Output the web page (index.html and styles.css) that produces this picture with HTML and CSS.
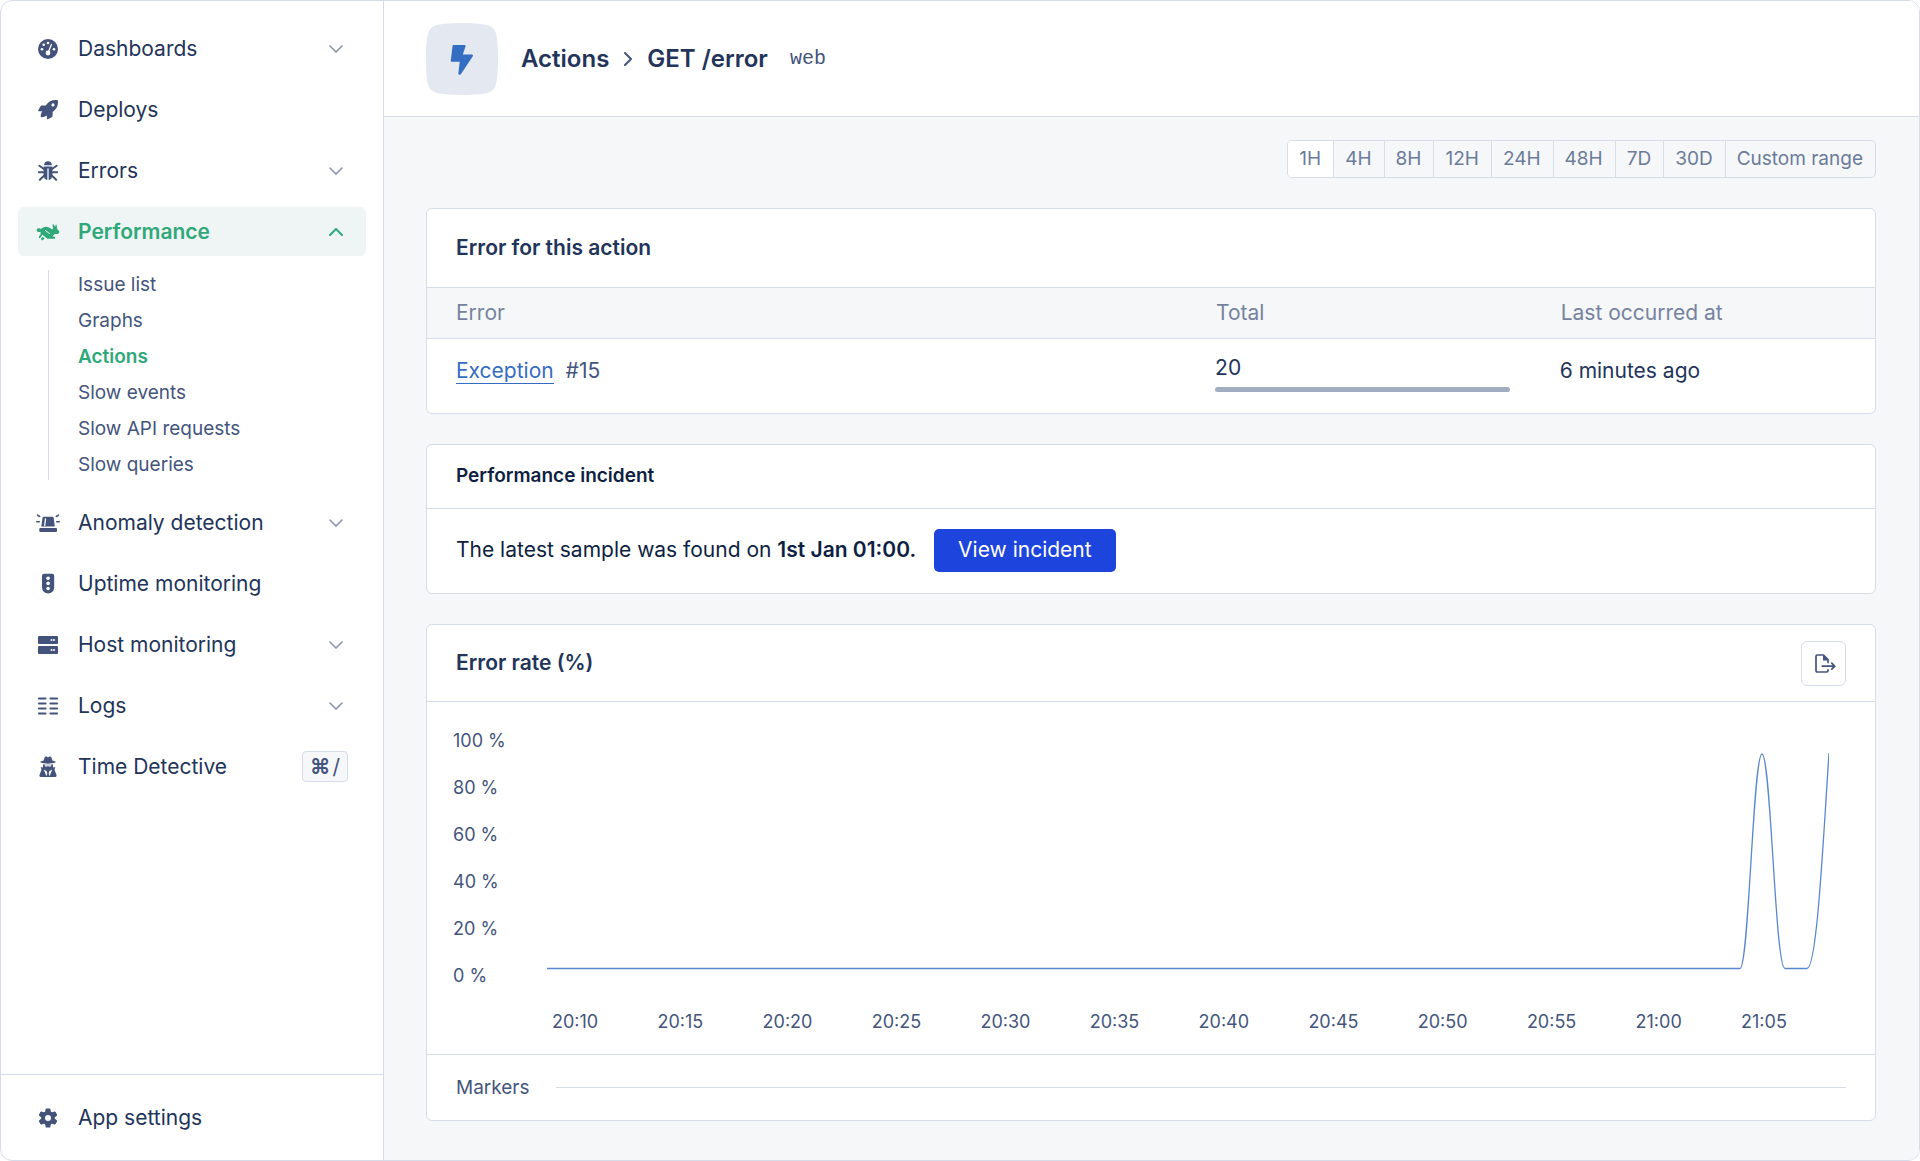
FILE: index.html
```html
<!DOCTYPE html>
<html lang="en">
<head>
<meta charset="utf-8">
<meta name="viewport" content="width=device-width, initial-scale=1">
<title>Actions – GET /error</title>
<link rel="stylesheet" href="styles.css">
</head>
<body>
<div class="frame">
  <aside class="sidebar">
    <nav class="nav">
      <button class="nav-item" type="button">
        <svg class="icon" viewBox="0 0 24 24"><circle cx="12" cy="12" r="10"/><g class="cut"><circle cx="12" cy="6" r="1.3"/><circle cx="7.7" cy="7.7" r="1.3"/><circle cx="6" cy="12.3" r="1.3"/><circle cx="18" cy="12.3" r="1.3"/><circle cx="12" cy="16" r="2.4"/></g><path class="cut-line" d="M15.4 7.4 12.6 14.5"/></svg>
        <span class="nav-label">Dashboards</span>
        <svg class="chevron" viewBox="0 0 14 8"><path d="M1 1l6 6 6-6"/></svg>
      </button>
      <a class="nav-item" href="#deploys">
        <svg class="icon" viewBox="0 0 24 24"><path d="M21.9 2.8c.4 4.5-1 8.2-5.3 11.3v3.7c0 .6-.3 1.1-.9 1.4l-3.9 2c-.5.2-.9-.1-.9-.6v-3c-1 .9-2.6 1.5-4.8 1.7-1 0-1.5-.5-1.4-1.5.2-2.100.8-3.600 1.700-4.600H2.900c-.6 0-.9-.5-.6-1L4.400 8.400c.3-.6.8-.9 1.400-.9h3.900C12.600 3.100 16.700 1.600 21.200 2.100c.4.1.6.3.7.7z"/><circle class="cut" cx="17" cy="6.900" r="1.600"/></svg>
        <span class="nav-label">Deploys</span>
      </a>
      <button class="nav-item" type="button">
        <svg class="icon" viewBox="0 0 24 24"><path d="M8.200 6.300a3.800 4 0 0 1 7.600 0z"/><path d="M7.600 7.500h8.800v8.800a4.400 4.800 0 0 1-8.800 0z"/><path class="bar" d="M3.300 6.700 8 10M20.700 6.700 16 10M2.800 13.300H21.200M3.800 20.700 8 16.700M20.200 20.700 16 16.700"/><path class="cut-line" d="M12 10v10.500"/></svg>
        <span class="nav-label">Errors</span>
        <svg class="chevron" viewBox="0 0 14 8"><path d="M1 1l6 6 6-6"/></svg>
      </button>
      <button class="nav-item nav-item-active" type="button" aria-expanded="true">
        <svg class="icon" viewBox="0 0 24 24"><path d="M2.300 8.300c1.100-.2 2 .3 2.600.8 1.800-2.300 5.700-3.300 8.700-1.300l2.500 1.800.9-1.100-.5-3.700c0-.7.700-.8 1.100-.3l1.700 2.500.2-1.900c.2-.7.900-.7 1.100-.1l.6 4.300 1.700 1.400c.8 1.300.3 3-1.200 3.200l-3 .1-2.300 2.400h1.500c.9 0 1.300.6 1.200 1.700l-.2.700h-7.500l-4.900-4-2.200 2.900c-.6.7-1.500.6-1.500-.2.100-1.200 1-2.500 1.900-3.300L4.500 11.800c-1.900.6-3.600 0-3.800-1.300-.1-1 .5-2 1.600-2.200z"/><path d="M5 18.500 6.500 17l2 1-1.500 2.200c-1 .4-2-.3-2-1.700z"/><path class="cut-line" d="M9.300 10.500 13.500 13.500"/></svg>
        <span class="nav-label">Performance</span>
        <svg class="chevron" viewBox="0 0 14 8"><path d="M1 7l6-6 6 6"/></svg>
      </button>
      <ul class="subnav">
        <li><a href="#issues">Issue list</a></li>
        <li><a href="#graphs">Graphs</a></li>
        <li><a class="current" href="#actions">Actions</a></li>
        <li><a href="#events">Slow events</a></li>
        <li><a href="#api">Slow API requests</a></li>
        <li><a href="#queries">Slow queries</a></li>
      </ul>
      <button class="nav-item" type="button">
        <svg class="icon" viewBox="0 0 24 24"><path d="M8 5.700h8.200c.8 0 1.300.4 1.500 1.200l1.100 8.600H5.300L6.500 6.900c.1-.8.700-1.200 1.500-1.200z"/><rect x="3.300" y="17" width="17.700" height="4" rx="1"/><path class="cut-line" d="M9.500 7.800 8.700 14.300"/><path class="ray" d="M.8 10.800h2.500M20.700 10.800h2.500M1.600 4.200l2 1.300M22.400 4.200l-2 1.300"/></svg>
        <span class="nav-label">Anomaly detection</span>
        <svg class="chevron" viewBox="0 0 14 8"><path d="M1 1l6 6 6-6"/></svg>
      </button>
      <a class="nav-item" href="#uptime">
        <svg class="icon" viewBox="0 0 24 24"><path d="M8 1.700h8.200a2 2 0 0 1 2 2v11.800a6.100 6.100 0 0 1-12.200 0V3.700a2 2 0 0 1 2-2z"/><g class="cut"><circle cx="12.100" cy="6.300" r="1.800"/><circle cx="12.100" cy="11.400" r="1.800"/><circle cx="12.100" cy="16.500" r="1.800"/></g></svg>
        <span class="nav-label">Uptime monitoring</span>
      </a>
      <button class="nav-item" type="button">
        <svg class="icon" viewBox="0 0 24 24"><rect x="2" y="3" width="20" height="8" rx="1"/><rect x="2" y="13" width="20" height="8" rx="1"/><g class="cut"><circle cx="15.500" cy="7" r="1"/><circle cx="18" cy="7" r="1"/><circle cx="15.500" cy="17" r="1"/><circle cx="18" cy="17" r="1"/></g></svg>
        <span class="nav-label">Host monitoring</span>
        <svg class="chevron" viewBox="0 0 14 8"><path d="M1 1l6 6 6-6"/></svg>
      </button>
      <button class="nav-item" type="button">
        <svg class="icon" viewBox="0 0 24 24"><path class="row" d="M3 4.500h6.500M14.500 4.500H21M3 9.500h6.500M14.500 9.500H21M3 14.500h6.500M14.500 14.500H21M3 19.500h6.500M14.500 19.500H21"/></svg>
        <span class="nav-label">Logs</span>
        <svg class="chevron" viewBox="0 0 14 8"><path d="M1 1l6 6 6-6"/></svg>
      </button>
      <button class="nav-item" type="button">
        <svg class="icon" viewBox="0 0 24 24"><path d="M9 2c.7-.6 1.600-.5 2.200 0 .5.4 1.100.4 1.600 0 .6-.5 1.500-.6 2.200 0 .8 1 1.200 2.200 1.400 3.600l3 .9c.5.5.2 1.100-.5 1.300-4.400 1.100-9.400 1.100-13.800 0-.7-.2-1-.8-.5-1.300l3-.9C7.800 4.200 8.200 3 9 2z"/><path d="M7 9.200c3.300.7 6.700.7 10 0v3.300l2.300-.5-.8 2.800 2 5.200c.4 1-.2 1.900-1.200 1.900H4.700c-1 0-1.600-.9-1.200-1.900l2-5.200-.8-2.800 2.300.5z"/><g class="cut"><path d="M8.500 10.200h7l-.6 1.300h-2.200l-.7-.6-.7.600H9.100zM8 14.500l2.700 1.700.6 2-.8 3L8.300 16zM16 14.500l-2.700 1.700-.6 2 .8 3L15.700 16z"/></g></svg>
        <span class="nav-label">Time Detective</span>
        <kbd class="shortcut"><b>⌘</b>/</kbd>
      </button>
    </nav>
    <div class="nav sidebar-foot">
      <a class="nav-item" href="#settings">
        <svg class="icon" viewBox="0 0 24 24"><circle cx="12" cy="12" r="6.900"/><path id="tooth" d="M9.600 3.300c.1-.6.5-.9 1-.9h2.800c.5 0 .9.3 1 .9l.6 3.500h-6z"/><use href="#tooth" transform="rotate(60 12 12)"/><use href="#tooth" transform="rotate(120 12 12)"/><use href="#tooth" transform="rotate(180 12 12)"/><use href="#tooth" transform="rotate(240 12 12)"/><use href="#tooth" transform="rotate(300 12 12)"/><circle class="cut" cx="12" cy="12" r="3"/></svg>
        <span class="nav-label">App settings</span>
      </a>
    </div>
  </aside>

  <main class="main">
    <header class="page-head">
      <svg class="badge" viewBox="0 0 72 72"><path fill="#e3e8f1" d="M36 0c14 0 23 .8 28 3.200 3 1.500 4.500 3 5.500 6C71.500 15 72 24 72 36s-.5 21-2.500 26.800c-1 3-2.500 4.500-5.500 6C59 71.200 50 72 36 72S13 71.200 8 68.800c-3-1.500-4.500-3-5.500-6C.5 57 0 48 0 36S.5 15 2.500 9.200c1-3 2.500-4.500 5.500-6C13 .8 22 0 36 0z"/><path fill="#346dc2" d="M27.800 22h10.700c.9 0 1.300.7 1 1.500L36.800 31.500h9c1 0 1.500.8 1 1.700L35 51c-.9 1.300-2.800.8-2.600-.8l1.300-11.400h-7.600c-.9 0-1.400-.5-1.300-1.400L26.500 23.300c.1-.8.5-1.300 1.300-1.300z"/></svg>
      <h1 class="crumbs">
        <span>Actions</span>
        <svg class="crumb-sep" viewBox="0 0 8 14"><path d="M1 1l6 6-6 6"/></svg>
        <span>GET /error</span>
      </h1>
      <span class="namespace">web</span>
    </header>

    <div class="content">
      <div class="ranges" role="group" aria-label="Time range">
        <button type="button" class="selected">1H</button>
        <button type="button">4H</button>
        <button type="button">8H</button>
        <button type="button">12H</button>
        <button type="button">24H</button>
        <button type="button">48H</button>
        <button type="button">7D</button>
        <button type="button">30D</button>
        <button type="button">Custom range</button>
      </div>

      <section class="card">
        <div class="card-head"><h2>Error for this action</h2></div>
        <table class="errors">
          <thead><tr><th class="col-error">Error</th><th class="col-total">Total</th><th>Last occurred at</th></tr></thead>
          <tbody><tr>
            <td><a class="link" href="#exception">Exception</a> <span class="number">#15</span></td>
            <td class="total">20<div class="meter"></div></td>
            <td>6 minutes ago</td>
          </tr></tbody>
        </table>
      </section>

      <section class="card">
        <div class="card-head card-head-small"><h2>Performance incident</h2></div>
        <div class="incident">
          <p>The latest sample was found on <strong>1st Jan 01:00.</strong></p>
          <button type="button" class="primary">View incident</button>
        </div>
      </section>

      <section class="card">
        <div class="card-head card-head-chart">
          <h2>Error rate (%)</h2>
          <button type="button" class="export" aria-label="Export">
            <svg viewBox="0 0 24 24"><path d="M16 18.800v1c0 .7-.5 1.200-1.200 1.200H5.200c-.7 0-1.200-.5-1.200-1.200V5.200C4 4.500 4.500 4 5.200 4H11.500L16 8.500v3"/><path class="fold" d="M11 4v5.400h5.700z"/><path d="M10.300 15.200H22.500M19.800 12.200l2.900 3-2.900 3"/></svg>
          </button>
        </div>
        <div class="chart">
          <div class="axis-y"><span>100 %</span><span>80 %</span><span>60 %</span><span>40 %</span><span>20 %</span><span>0 %</span></div>
          <svg class="plot" viewBox="0 0 1282 217" preserveAspectRatio="none"><path d="M0 215.500H1193C1202 215.500 1206 1 1215 1S1228 215.500 1238 215.500H1260C1270 215.500 1276 90 1282 0"/></svg>
          <div class="axis-x"><span>20:10</span><span>20:15</span><span>20:20</span><span>20:25</span><span>20:30</span><span>20:35</span><span>20:40</span><span>20:45</span><span>20:50</span><span>20:55</span><span>21:00</span><span>21:05</span></div>
        </div>
        <div class="markers"><span>Markers</span><div class="track"></div></div>
      </section>
    </div>
  </main>
</div>
</body>
</html>
```
FILE: styles.css
```css
:root {
  --line: #d6dce8;
  --ink: #22345a;
  --deep: #0e1f42;
  --muted: #44557d;
  --soft: #6c7b99;
  --green: #2fa87a;
  --blue: #346dc2;
  --canvas: #f5f7f9;
}

* { box-sizing: border-box; }

body {
  margin: 0;
  background: #fff;
  color: var(--ink);
  font-family: Inter, "Liberation Sans", sans-serif;
  font-size: 21px;
  line-height: 24px;
}

h1, h2, p, ul { margin: 0; padding: 0; }
button { font: inherit; color: inherit; background: none; border: 0; padding: 0; cursor: pointer; }
a { color: inherit; text-decoration: none; }

.frame {
  display: flex;
  min-height: 100vh;
  border: 1px solid var(--line);
  border-radius: 12px;
  overflow: hidden;
}

/* Sidebar */
.sidebar {
  display: flex;
  flex: 0 0 383px;
  flex-direction: column;
  justify-content: space-between;
  border-right: 1px solid var(--line);
}
.nav {
  display: flex;
  flex-direction: column;
  gap: 12px;
  padding: 23px 17px;
}
.sidebar-foot {
  padding: 18px 17px;
  border-top: 1px solid var(--line);
}
.nav-item {
  display: flex;
  align-items: center;
  gap: 18px;
  height: 49px;
  padding: 0 18px;
  border-radius: 6px;
  text-align: left;
}
.nav-label { flex: 1; }
.nav-item-active {
  background: #eff5f5;
  color: var(--green);
  font-weight: 600;
}
.icon { width: 24px; height: 24px; fill: #43537b; stroke-linecap: round; }
.nav-item-active .icon { fill: var(--green); }
.cut { fill: #fff; }
.cut-line { fill: none; stroke: #fff; stroke-width: 1.3; }
.nav-item-active .cut-line { stroke: #eff5f5; stroke-width: 1; }
.bar { fill: none; stroke: #43537b; stroke-width: 2; }
.ray { fill: none; stroke: #43537b; stroke-width: 1.6; }
.row { fill: none; stroke: #43537b; stroke-width: 2.2; }
.chevron {
  width: 14px;
  height: 8px;
  margin-right: 5px;
  fill: none;
  stroke: #8995af;
  stroke-width: 1.6;
  stroke-linecap: round;
}
.nav-item-active .chevron { stroke: var(--green); stroke-width: 2; }
.subnav {
  display: flex;
  flex-direction: column;
  gap: 6px;
  margin: 2px 0 6px 30px;
  padding-left: 29px;
  border-left: 1px solid var(--line);
  list-style: none;
  color: var(--muted);
  font-size: 19px;
  line-height: 30px;
}
.subnav .current { color: var(--green); font-weight: 600; }
.shortcut {
  display: flex;
  align-items: center;
  justify-content: center;
  gap: 2px;
  width: 46px;
  height: 31px;
  border: 1px solid var(--line);
  border-radius: 4px;
  background: var(--canvas);
  color: var(--muted);
  font-family: inherit;
  font-size: 21px;
}

/* Page header */
.main { flex: 1; min-width: 0; background: var(--canvas); }
.page-head {
  display: flex;
  align-items: center;
  height: 116px;
  padding: 0 42px;
  border-bottom: 1px solid var(--line);
  background: #fff;
}
.badge { width: 72px; height: 72px; }
.crumbs {
  display: flex;
  align-items: center;
  gap: 15px;
  margin: 0 22px 0 23px;
  font-size: 24px;
  font-weight: 600;
  line-height: 32px;
}
.crumb-sep { width: 8px; height: 14px; fill: none; stroke: var(--muted); stroke-width: 2; stroke-linecap: round; }
.namespace { color: var(--muted); font-family: "Liberation Mono", monospace; font-size: 20px; }

.content {
  display: flex;
  flex-direction: column;
  gap: 30px;
  padding: 23px 43px 38px 42px;
}

/* Time range */
.ranges {
  display: flex;
  align-self: flex-end;
  height: 38px;
  border: 1px solid var(--line);
  border-radius: 5px;
  color: var(--soft);
  font-size: 19px;
  overflow: hidden;
}
.ranges button { padding: 0 12px 0 11px; }
.ranges button + button { border-left: 1px solid var(--line); }
.ranges .selected { background: #fff; }

/* Cards */
.card {
  border: 1px solid var(--line);
  border-radius: 6px;
  background: #fff;
  overflow: hidden;
}
.card-head {
  display: flex;
  align-items: center;
  justify-content: space-between;
  height: 79px;
  padding: 0 29px;
  border-bottom: 1px solid var(--line);
}
h2 { font-size: 21px; font-weight: 600; }
.card-head-small { height: 64px; padding-bottom: 2px; }
.card-head-small h2 { color: var(--deep); font-size: 19px; }
.card-head-chart { height: 77px; }

.errors { width: 100%; border-collapse: separate; border-spacing: 0; table-layout: fixed; text-align: left; }
.errors th {
  height: 51px;
  padding: 0 26px;
  border-bottom: 1px solid var(--line);
  background: var(--canvas);
  color: #75839f;
  font-weight: 400;
}
.errors td { height: 74px; padding: 0 25px 10px; }
.errors td:first-child, .errors th:first-child { padding-left: 29px; }
.errors .total { padding-bottom: 4px; }
.col-error { width: 52.7%; }
.col-total { width: 23.8%; }
.link { color: var(--blue); border-bottom: 1px solid var(--blue); }
.number { margin-left: 6px; color: var(--muted); }
.meter { height: 5px; margin-top: 7px; border-radius: 3px; background: #a1adc0; }

.incident {
  display: flex;
  align-items: center;
  gap: 18px;
  height: 84px;
  padding: 0 29px 2px;
  color: var(--deep);
}
.incident strong { font-weight: 600; }
.primary {
  height: 43px;
  padding: 0 24px;
  border-radius: 5px;
  background: #1d44dc;
  color: #fff;
}

.export {
  display: flex;
  align-items: center;
  justify-content: center;
  width: 45px;
  height: 45px;
  border: 1px solid var(--line);
  border-radius: 6px;
}
.export svg { width: 24px; height: 24px; fill: none; stroke: var(--muted); stroke-width: 1.7; stroke-linecap: round; }
.export .fold { fill: var(--muted); stroke: none; }

/* Chart */
.chart {
  display: grid;
  grid-template-columns: 94px 1fr;
  row-gap: 23px;
  padding: 27px 46px 21px 26px;
  color: var(--muted);
  font-size: 18px;
  line-height: 23px;
}
.axis-y { display: flex; flex-direction: column; gap: 24px; }
.plot { width: 100%; height: 217px; margin-top: 24px; fill: none; stroke: #5a88cf; stroke-width: 1.3; }
.plot path { vector-effect: non-scaling-stroke; }
.axis-x { grid-column: 2; display: flex; justify-content: space-between; padding: 0 42px 0 5px; }
.markers {
  display: flex;
  align-items: center;
  gap: 26px;
  height: 66px;
  padding: 0 29px;
  border-top: 1px solid var(--line);
  color: var(--muted);
  font-size: 19px;
}
.track { flex: 1; height: 1px; background: var(--line); }
```
